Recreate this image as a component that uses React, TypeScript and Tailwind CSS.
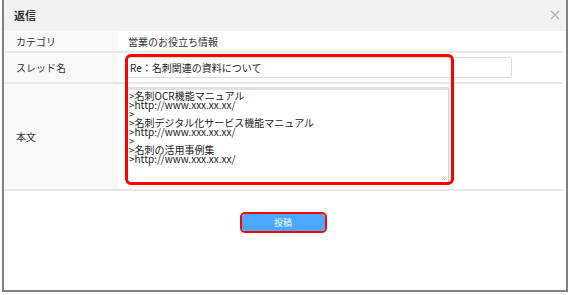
import React from "react";

const font = { fontFamily: '"Noto Sans CJK JP", "Noto Sans", sans-serif' };

export default function App() {
  const lines = [
    ">名刺OCR機能マニュアル",
    ">http://www.xxx.xx.xx/",
    ">",
    ">名刺デジタル化サービス機能マニュアル",
    ">http://www.xxx.xx.xx/",
    ">",
    ">名刺の活用事例集",
    ">http://www.xxx.xx.xx/",
  ];
  return (
    <div className="w-[570px] h-[295px] bg-white" style={font}>
      <div className="relative ml-[2px] w-[566px] h-[292px] border-l-2 border-r-2 border-b-2 border-[#808080] flex flex-col text-[#333]">
        {/* header */}
        <div className="h-[31px] bg-[#f2f2f2] flex items-center justify-between pl-[10px] pr-[6px] shrink-0">
          <span className="text-[11px] font-bold text-[#333] leading-none">返信</span>
          <svg width="10" height="10" viewBox="0 0 10 10" className="mt-[-2px]">
            <path d="M1 1 L9 9 M9 1 L1 9" stroke="#b0b0b0" strokeWidth="1.2" />
          </svg>
        </div>
        {/* table */}
        <div className="pl-[1px] pr-[3px] flex flex-col">
          <div className="flex h-[22px] border-b-2 border-[#e8e8e8]">
            <div className="w-[113px] bg-[#f8f8f8] flex items-center pl-[11px] text-[10px]">カテゴリ</div>
            <div className="flex-1 flex items-center pl-[10px] text-[10px]">営業のお役立ち情報</div>
          </div>
          <div className="flex h-[31px] border-b-2 border-[#e8e8e8]">
            <div className="w-[113px] bg-[#f8f8f8] flex items-center pl-[11px] text-[10px]">スレッド名</div>
            <div className="flex-1 flex items-center pl-[8px]">
              <div className="w-[386px] h-[21px] border border-[#dcdcdc] rounded-[2px] flex items-center pl-[3px] text-[10px] text-[#222]">
                Re：名刺関連の資料について
              </div>
            </div>
          </div>
          <div className="flex h-[107px] border-b-2 border-[#e8e8e8]">
            <div className="w-[113px] bg-[#f8f8f8] flex items-center pl-[11px] text-[10px]">本文</div>
            <div className="flex-1 pl-[9px] pt-[3px]">
              <div className="relative w-[322px] h-[96px] border border-[#cfcfcf] border-t-[3px] border-t-[#e0e0e0] pl-[1px] pt-[1px] text-[10px] leading-[9px] text-[#222]">
                {lines.map((l, i) => (
                  <div key={i} className="whitespace-pre h-[9px]">{l}</div>
                ))}
                <svg width="6" height="6" viewBox="0 0 6 6" className="absolute right-[1px] bottom-[1px]">
                  <path d="M5 1 L1 5 M5 3 L3 5" stroke="#b5b5b5" strokeWidth="0.8" />
                </svg>
              </div>
            </div>
          </div>
        </div>
        {/* footer */}
        <div className="flex justify-center pt-[21px] pr-[4px]">
          <div className="w-[87px] h-[21px] border-2 border-[#ff0000] rounded-[5px] flex">
            <div className="flex-1 bg-[#4aa9ff] rounded-[3px] flex items-center justify-center text-white text-[9px]">
              投稿
            </div>
          </div>
        </div>
        {/* red annotation box */}
        <div className="absolute left-[121px] top-[54px] w-[329px] h-[131px] border-[3px] border-[#ff0000] rounded-[6px] pointer-events-none" />
      </div>
    </div>
  );
}
